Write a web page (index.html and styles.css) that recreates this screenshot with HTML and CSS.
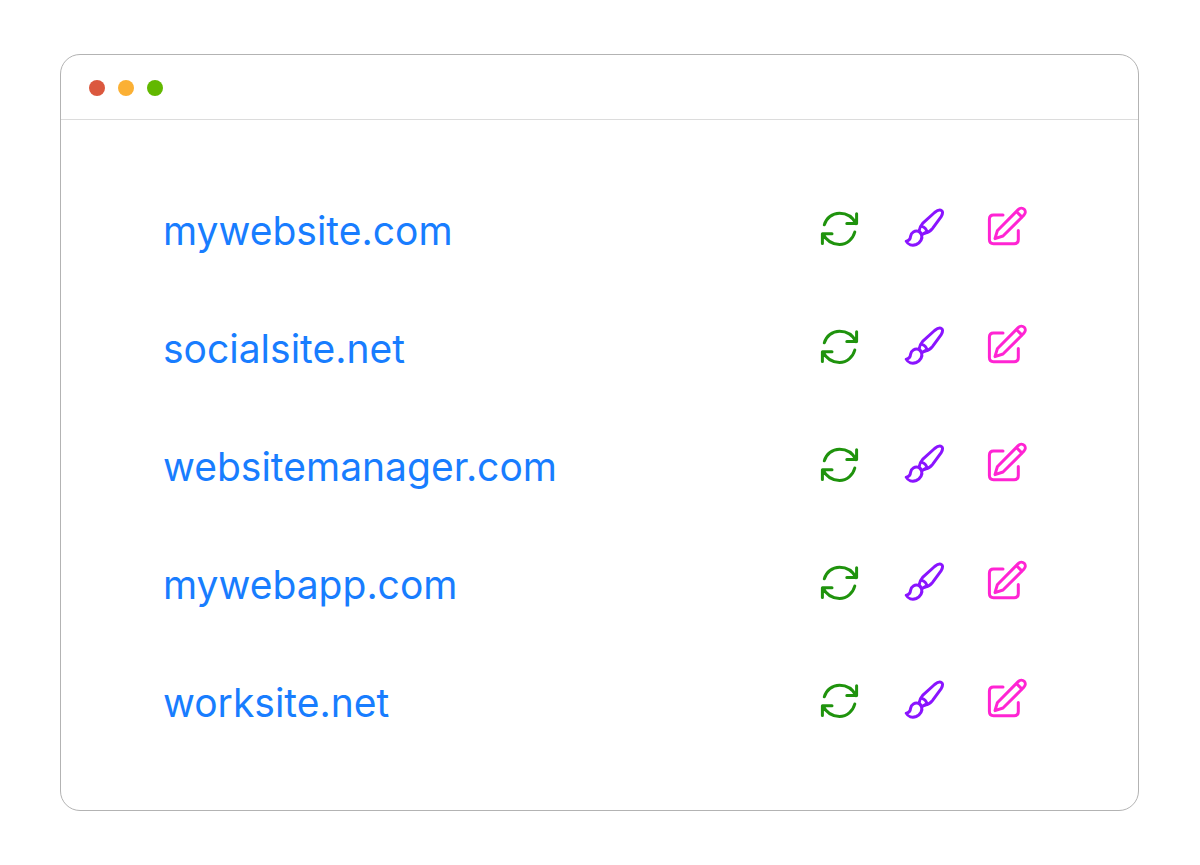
FILE: index.html
```
<!DOCTYPE html>
<html lang="en">
<head>
  <meta charset="UTF-8">
  <meta name="viewport" content="width=device-width, initial-scale=1.0">
  <title>Websites</title>
  <link rel="stylesheet" href="styles.css">
</head>
<body>

  <!-- Shared icons -->
  <svg class="sprite" aria-hidden="true">
    <symbol id="sync" viewBox="0 0 60 60">
      <path d="M14.3 26.8C16.3 20 22.2 15.2 29.5 15.2C37 15.2 43 19.5 46 25.6M36.8 25.6H46.6V15.8"/>
      <path d="M44.8 34C43 41 37 46.4 29.5 46.4C22 46.4 16 42 12.8 35.8M22 35.8H12.4V45.5"/>
    </symbol>
    <symbol id="brush" viewBox="0 0 60 60">
      <path d="M25 33.2C25.4 30.2 26.4 27.8 28.6 25.4L40.6 14.5C43.2 12.3 46.2 11.6 47.6 12.6C49.3 13.8 48.4 16.4 47.2 18.6L38.4 30.6C36.4 33.2 33.6 34.7 30.6 35.2"/>
      <path d="M27.4 28.4C30.4 29 32.4 31 33.2 34.2M25 33.2L28 36.6"/>
      <path d="M24.8 33.4C20.6 32.2 17.2 34.4 16.6 38.2C16.4 40.6 15 43 12.2 43.2C14 46.8 18.3 48 22.2 46.5C26.7 44.6 28.8 40.4 27.5 36.8C27 35.2 26 34 24.8 33.4ZM28 36.6L31 34.8"/>
    </symbol>
    <symbol id="edit" viewBox="0 0 60 60">
      <path d="M25 17.1H15.5Q11.4 17.1 11.4 21.2V41.6Q11.4 45.7 15.5 45.7H36.2Q40.3 45.7 40.3 41.6V32.5"/>
      <path d="M17 40.6L19.3 32.8L40.2 11.6C42 9.8 44.6 9.7 46.2 11.3C47.8 12.9 47.6 15.5 45.8 17.3L25 38ZM38.4 13.5L44 19.1"/>
    </symbol>
  </svg>

  <main class="window">
    <header class="titlebar">
      <span class="dot red"></span>
      <span class="dot yellow"></span>
      <span class="dot green"></span>
    </header>

    <ul class="sites">
      <li class="site">
        <a href="#">mywebsite.com</a>
        <div class="actions">
          <button class="sync" aria-label="Update"><svg><use href="#sync"/></svg></button>
          <button class="brush" aria-label="Design"><svg><use href="#brush"/></svg></button>
          <button class="edit" aria-label="Edit"><svg><use href="#edit"/></svg></button>
        </div>
      </li>
      <li class="site">
        <a href="#">socialsite.net</a>
        <div class="actions">
          <button class="sync" aria-label="Update"><svg><use href="#sync"/></svg></button>
          <button class="brush" aria-label="Design"><svg><use href="#brush"/></svg></button>
          <button class="edit" aria-label="Edit"><svg><use href="#edit"/></svg></button>
        </div>
      </li>
      <li class="site">
        <a href="#">websitemanager.com</a>
        <div class="actions">
          <button class="sync" aria-label="Update"><svg><use href="#sync"/></svg></button>
          <button class="brush" aria-label="Design"><svg><use href="#brush"/></svg></button>
          <button class="edit" aria-label="Edit"><svg><use href="#edit"/></svg></button>
        </div>
      </li>
      <li class="site">
        <a href="#">mywebapp.com</a>
        <div class="actions">
          <button class="sync" aria-label="Update"><svg><use href="#sync"/></svg></button>
          <button class="brush" aria-label="Design"><svg><use href="#brush"/></svg></button>
          <button class="edit" aria-label="Edit"><svg><use href="#edit"/></svg></button>
        </div>
      </li>
      <li class="site">
        <a href="#">worksite.net</a>
        <div class="actions">
          <button class="sync" aria-label="Update"><svg><use href="#sync"/></svg></button>
          <button class="brush" aria-label="Design"><svg><use href="#brush"/></svg></button>
          <button class="edit" aria-label="Edit"><svg><use href="#edit"/></svg></button>
        </div>
      </li>
    </ul>
  </main>

</body>
</html>
```
FILE: styles.css
```
* {
  box-sizing: border-box;
}
body {
  margin: 0;
  padding: 54px 61px 54px 60px;
  background-color: #fff;
  font-family: Inter, "Open Sans", sans-serif;
}
.sprite {
  display: none;
}
.window {
  border: 1px solid #b3b3b3;
  border-radius: 20px;
}

/* Title bar */
.titlebar {
  display: flex;
  align-items: center;
  gap: 13px;
  height: 65px;
  padding: 2px 28px 0;
  border-bottom: 1px solid #dcdcdc;
}
.dot {
  width: 16px;
  height: 16px;
  border-radius: 50%;
}
.red {
  background-color: #db583e;
}
.yellow {
  background-color: #fbb034;
}
.green {
  background-color: #62b800;
}

/* Site list */
.sites {
  margin: 0;
  padding: 49px 100px 51px 102px;
  list-style: none;
}
.site {
  display: flex;
  align-items: center;
  justify-content: space-between;
  min-height: 118px;
}
.site a {
  padding-top: 6px;
  color: #187dff;
  font-size: 39px;
  line-height: 46px;
  text-decoration: none;
}
.actions {
  display: flex;
  gap: 24px;
}
.actions button {
  padding: 0;
  border: 0;
  background: none;
  cursor: pointer;
}
.actions svg {
  display: block;
  width: 60px;
  height: 60px;
  fill: none;
  stroke: currentColor;
  stroke-width: 3;
  stroke-linecap: round;
  stroke-linejoin: round;
}
.sync {
  color: #1f930d;
}
.brush {
  color: #8a14ff;
}
.edit {
  color: #ff24d3;
}
```
